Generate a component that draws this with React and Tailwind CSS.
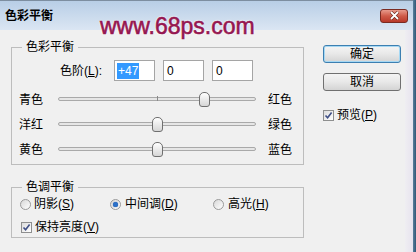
import React from 'react';

const font = "font-['Liberation_Sans','Noto_Sans_CJK_SC',sans-serif]";

const Check = () => (
  <span className="flex h-[11px] w-[11px] items-center justify-center border border-[#8e8f8f] bg-gradient-to-br from-[#dcdcdc] to-white">
    <svg width="9" height="9" viewBox="0 0 9 9">
      <path d="M1.5 4.5 L3.6 6.8 L7.6 1.6" fill="none" stroke="#3f4f86" strokeWidth="1.6" />
    </svg>
  </span>
);

const Radio = ({ on }) => (
  <span className="flex h-[11px] w-[11px] items-center justify-center rounded-full border border-[#9a9a9a] bg-gradient-to-br from-[#d8d8d8] to-white">
    {on && <span className="h-[5px] w-[5px] rounded-full bg-[#2c71c9] shadow-[0_0_1px_#16458a]" />}
  </span>
);

const Slider = ({ left, right, value }) => {
  const pos = Math.round(((value + 100) / 200) * 198);
  return (
    <div className="flex h-[25px] items-center">
      <span className="ml-[7px] w-[39px]">{left}</span>
      <div className="relative h-[25px] w-[198px]">
        <div className="absolute left-0 right-0 top-[10px] h-[4px] rounded-full border border-[#a9a9a9] bg-[#e6e6e6]" />
        <div className="absolute left-[99px] top-[9px] h-[5px] w-px bg-[#8a8a8a]" />
        <div
          className="absolute top-[5px] h-[15px] w-[11px] rounded-[3px] rounded-t-[5px] border border-[#6f6f6f] bg-gradient-to-b from-white to-[#d6d6d6]"
          style={{ left: pos - 5 }}
        />
      </div>
      <span className="ml-[12px]">{right}</span>
    </div>
  );
};

const Button = ({ children, focus }) => (
  <div
    className={
      'flex h-[18px] w-[78px] items-center justify-center rounded-[3px] border bg-gradient-to-b from-[#f4f4f4] via-[#e8e8e8] to-[#d4d4d4] ' +
      (focus ? 'border-[#3c7fb1] shadow-[inset_0_0_0_1px_#a6d8f3]' : 'border-[#707070]')
    }
  >
    {children}
  </div>
);

const App = () => {
  return (
    <div className={`relative flex h-[252px] w-[416px] overflow-hidden text-[12px] leading-[16px] text-black ${font}`}>
      <div className="flex w-[413px] flex-col">
        {/* Title bar */}
        <div className="flex h-[30px] items-center border-t border-[#7d8ea0] bg-gradient-to-b from-[#b8cee6] to-[#dbe6f3] pl-[5px] pr-[5px]">
          <span className="font-bold">色彩平衡</span>
          <div className="ml-auto flex h-[14px] w-[28px] items-center justify-center rounded-[3px] border border-[#7a2b22] bg-gradient-to-b from-[#e79a8c] via-[#cf5a48] to-[#b8392a]">
            <svg width="11" height="9" viewBox="0 0 11 9">
              <path d="M2 1 L9 8 M9 1 L2 8" stroke="#5a1a12" strokeWidth="3" />
              <path d="M2 1 L9 8 M9 1 L2 8" stroke="#ffffff" strokeWidth="1.8" />
            </svg>
          </div>
        </div>

        {/* Body */}
        <div className="flex flex-1 bg-[#f0f0f0]">
          <div className="flex flex-1">
            <div className="flex flex-col">
              <fieldset className="ml-[11px] mt-[9px] w-[293px] border border-[#bdbdbd] px-0 pb-[2px] pt-[5px]">
                <legend className="ml-[10px] px-[4px]">色彩平衡</legend>
                <div className="flex h-[21px] items-center">
                  <span className="ml-[48px] w-[54px]">
                    色阶(<span className="underline">L</span>):
                  </span>
                  <div className="flex h-[21px] w-[41px] items-center border border-[#a5a5a5] bg-white pl-[2px]">
                    <span className="bg-[#3399ff] px-px text-white">+47</span>
                  </div>
                  <div className="ml-[8px] flex h-[21px] w-[41px] items-center border border-[#a5a5a5] bg-white pl-[3px]">0</div>
                  <div className="ml-[8px] flex h-[21px] w-[41px] items-center border border-[#a5a5a5] bg-white pl-[3px]">0</div>
                </div>
                <div className="mt-[6px]">
                  <Slider left="青色" right="红色" value={47} />
                  <Slider left="洋红" right="绿色" value={0} />
                  <Slider left="黄色" right="蓝色" value={0} />
                </div>
              </fieldset>

              <fieldset className="ml-[11px] mt-[14px] w-[293px] border border-[#bdbdbd] px-0 pb-[1px] pt-0">
                <legend className="ml-[10px] px-[4px]">色调平衡</legend>
                <div className="flex h-[18px] items-center pl-[8px]">
                  <div className="flex w-[90px] items-center gap-[3px]">
                    <Radio />
                    <span>
                      阴影(<span className="underline">S</span>)
                    </span>
                  </div>
                  <div className="flex w-[103px] items-center gap-[4px]">
                    <Radio on />
                    <span>
                      中间调(<span className="underline">D</span>)
                    </span>
                  </div>
                  <div className="flex items-center gap-[4px]">
                    <Radio />
                    <span>
                      高光(<span className="underline">H</span>)
                    </span>
                  </div>
                </div>
                <div className="mt-[5px] flex h-[18px] items-center gap-[3px] pl-[9px]">
                  <Check />
                  <span>
                    保持亮度(<span className="underline">V</span>)
                  </span>
                </div>
              </fieldset>
            </div>

            <div className="ml-[19px] mt-[15px] flex flex-col">
              <Button focus>确定</Button>
              <div className="mt-[10px]">
                <Button>取消</Button>
              </div>
              <div className="mt-[16px] flex items-center gap-[3px]">
                <Check />
                <span>
                  预览(<span className="underline">P</span>)
                </span>
              </div>
            </div>
          </div>
          <div className="w-[8px] bg-gradient-to-r from-[#efeef2] to-[#e7e3ee]" />
        </div>
      </div>
      <div className="w-[3px] bg-gradient-to-r from-[#5a7f9c] to-[#2f5876]" />

      {/* Watermark */}
      <span className="absolute left-[100px] top-[15px] font-['Liberation_Sans',sans-serif] text-[23px] leading-none text-[#951650] [-webkit-text-stroke:0.6px_#951650] [text-shadow:0_0_2px_#fff,0_0_2px_#fff,0_0_1px_#fff]">
        www.68ps.com
      </span>
    </div>
  );
};

export default App;
